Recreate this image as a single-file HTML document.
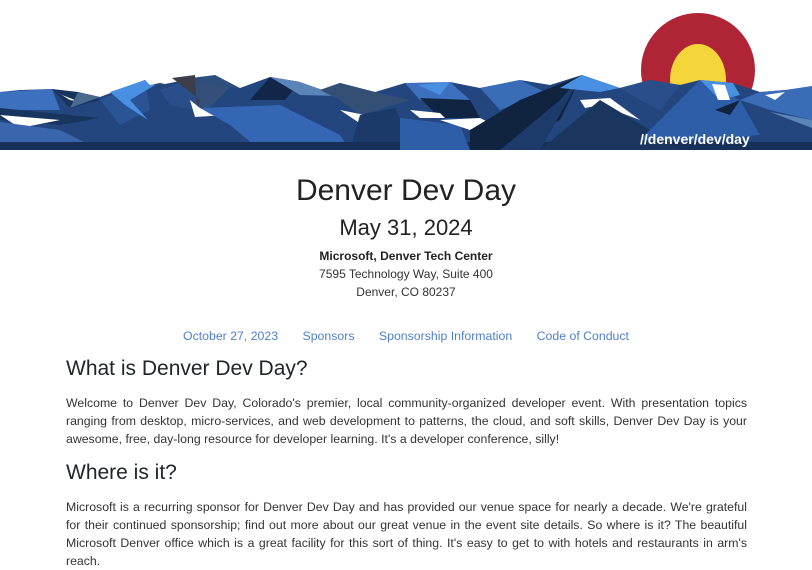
<!DOCTYPE html>
<html><head><meta charset="utf-8"><style>
html,body{margin:0;padding:0;background:#fff;width:812px;height:563px;overflow:hidden}
body{font-family:"Liberation Sans",sans-serif;color:#212529}
.hdr{position:relative;width:812px;height:150px}
.c{text-align:center;position:absolute;left:0;width:812px}
h1,h2,p{margin:0;font-weight:normal}
.t{position:absolute;left:66px;width:681px}
p.t{font-size:12.3px;line-height:18px;text-align:justify;color:#333}
h2.t{font-size:21px;font-weight:500}
.nav a{color:#4f7fcf;text-decoration:none;margin:0 10px;font-size:12.3px}
</style></head><body>
<div class="hdr">
<svg width="812" height="150" viewBox="0 0 812 150">
<circle cx="698" cy="70" r="57" fill="#b02535"/>
<ellipse cx="698" cy="80" rx="28" ry="36" fill="#f5d63a"/>
<polygon points="0,92 20,90 52,89 65,93 78,92 100,97 145,80 165,84 190,79 240,88 270,77 300,82 320,90 340,83 375,92 405,83 420,90 450,82 480,88 520,80 550,85 582,75 620,88 650,80 680,85 700,80 733,83 760,92 785,90 800,90 812,86 812,150 0,150" fill="#23467f"/>
<polygon points="0,92 52,89 60,110 0,110" fill="#3e70c0"/>
<polygon points="52,89 78,92 100,100 70,108" fill="#17335e"/>
<polygon points="52,89 62,95 80,102 70,100" fill="#fff"/>
<polygon points="78,92 100,97 70,108" fill="#4a6a8e"/>
<polygon points="0,108 40,112 100,118 60,125 0,120" fill="#1a3460"/>
<polygon points="0,115 60,120 20,128" fill="#fff"/>
<polygon points="0,122 60,130 100,150 0,150" fill="#3a66ad"/>
<polygon points="100,100 145,80 150,110 120,125" fill="#2b5495"/>
<polygon points="110,92 145,80 155,85 130,100 148,120 125,105" fill="#4a90e2"/>
<polygon points="145,80 160,83 150,85" fill="#fff"/>
<polygon points="160,90 190,79 220,90 195,110 170,105" fill="#2a4e8a"/>
<polygon points="190,79 230,87 205,112 196,95" fill="#34507a"/>
<polygon points="175,80 215,75 240,88" fill="#2e4f7e"/>
<polygon points="172,78 195,75 197,110 200,100" fill="#3c3f4a"/>
<polygon points="190,100 195,117 260,113 280,110 200,108" fill="#fff"/>
<polygon points="200,108 280,105 340,135 350,150 260,150 230,125" fill="#3566b3"/>
<polygon points="250,100 270,77 300,82 285,100" fill="#12264a"/>
<polygon points="285,85 300,82 330,92 320,95" fill="#fff"/>
<polygon points="270,77 300,82 340,96 300,95" fill="#5b84b8"/>
<polygon points="320,90 340,83 375,92 410,100 360,115 340,100" fill="#344f76"/>
<polygon points="340,110 380,118 405,125 370,130" fill="#fff"/>
<polygon points="360,115 395,108 410,140 380,150 350,150" fill="#1b3a6a"/>
<polygon points="0,142 812,142 812,150 0,150" fill="#16305a"/>
<polygon points="405,83 450,82 470,100 420,100" fill="#3e70c0"/>
<polygon points="418,85 450,82 440,95" fill="#4a90e2"/>
<polygon points="420,98 470,100 480,118 440,118" fill="#0f2541"/>
<polygon points="410,110 440,113 445,118 420,118" fill="#fff"/>
<polygon points="400,118 460,125 470,150 400,150" fill="#2f5ea8"/>
<polygon points="440,120 480,118 500,128 470,130" fill="#fff"/>
<polygon points="480,88 520,80 545,92 500,110" fill="#3a6cb8"/>
<polygon points="470,130 520,100 582,75 560,120 500,150 470,150" fill="#10243f"/>
<polygon points="500,150 560,100 582,75 540,150" fill="#1c3a6a"/>
<polygon points="560,88 582,75 620,88 600,92" fill="#4a90e2"/>
<polygon points="580,100 610,98 640,120 600,105 585,108" fill="#fff"/>
<polygon points="540,150 600,100 650,130 680,150" fill="#1a365f"/>
<polygon points="620,88 650,80 680,85 660,110 640,100" fill="#2a4e8a"/>
<polygon points="640,140 700,80 740,100 760,135 700,140" fill="#2f5ea8"/>
<polygon points="700,80 733,83 740,95 720,100" fill="#4a90e2"/>
<polygon points="712,84 725,85 730,100 718,100" fill="#fff"/>
<polygon points="715,110 740,100 730,115" fill="#10243f"/>
<polygon points="740,100 760,92 785,90 812,86 812,120 770,110" fill="#3a6cb8"/>
<polygon points="765,95 785,92 775,100" fill="#fff"/>
<polygon points="770,112 812,120 812,128" fill="#5b84b8"/>
<text x="640" y="144" font-family="Liberation Sans,sans-serif" font-size="14" font-weight="bold" fill="#fff">//denver/dev/day</text>
</svg>
</div>
<div class="c" style="top:174px;font-size:30px;color:#222">Denver Dev Day</div>
<div class="c" style="top:215px;font-size:22px;color:#222">May 31, 2024</div>
<div class="c" style="top:249px;font-size:12px;font-weight:bold;color:#222">Microsoft, Denver Tech Center</div>
<div class="c" style="top:267px;font-size:12px;color:#333">7595 Technology Way, Suite 400</div>
<div class="c" style="top:285px;font-size:12px;color:#333">Denver, CO 80237</div>
<div class="c nav" style="top:327px"><a>October 27, 2023</a> <a>Sponsors</a> <a>Sponsorship Information</a> <a>Code of Conduct</a></div>
<h2 class="t" style="top:357px">What is Denver Dev Day?</h2>
<p class="t" style="top:394px">Welcome to Denver Dev Day, Colorado's premier, local community-organized developer event. With presentation topics ranging from desktop, micro-services, and web development to patterns, the cloud, and soft skills, Denver Dev Day is your awesome, free, day-long resource for developer learning. It's a developer conference, silly!</p>
<h2 class="t" style="top:461px">Where is it?</h2>
<p class="t" style="top:498px">Microsoft is a recurring sponsor for Denver Dev Day and has provided our venue space for nearly a decade. We're grateful for their continued sponsorship; find out more about our great venue in the event site details. So where is it? The beautiful Microsoft Denver office which is a great facility for this sort of thing. It's easy to get to with hotels and restaurants in arm's reach.</p>
</body></html>
